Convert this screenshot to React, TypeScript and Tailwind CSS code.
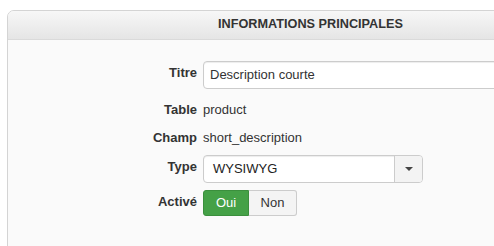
export default function App() {
  const font = { fontFamily: '"Liberation Sans", Arial, sans-serif' };

  return (
    <div className="w-[494px] h-[246px] overflow-hidden bg-white pl-[7px] pt-[10px]" style={font}>
      <div className="w-[607px] h-[260px] border border-[#d4d4d4] rounded-tl-[7px] bg-[#fafafa] text-[13px] text-[#333]">
        {/* header */}
        <div className="h-[29px] rounded-tl-[6px] bg-gradient-to-b from-[#f7f7f7] to-[#e5e5e5] border-b border-[#dadada] flex items-center justify-center">
          <span className="text-[12.7px] font-bold text-[#333]">INFORMATIONS PRINCIPALES</span>
        </div>

        {/* form */}
        <div className="pt-[21px] flex flex-col">
          <div className="flex items-start h-[28px]">
            <div className="w-[189px] text-right font-bold leading-[18px] pt-[3px]">Titre</div>
            <div className="ml-[6px] flex-1">
              <div className="h-[28px] border border-[#cccccc] rounded-[4px] bg-white shadow-[inset_0_1px_1px_rgba(0,0,0,0.075)] flex items-center pl-[6px]">
                Description courte
              </div>
            </div>
          </div>

          <div className="flex items-start h-[18px] mt-[12px]">
            <div className="w-[189px] text-right font-bold leading-[18px]">Table</div>
            <div className="ml-[6px] leading-[18px]">product</div>
          </div>

          <div className="flex items-start h-[18px] mt-[10px]">
            <div className="w-[189px] text-right font-bold leading-[18px]">Champ</div>
            <div className="ml-[6px] leading-[18px]">short_description</div>
          </div>

          <div className="flex items-start h-[28px] mt-[8px]">
            <div className="w-[189px] text-right font-bold leading-[18px] pt-[3px]">Type</div>
            <div className="ml-[6px] w-[220px] h-[28px] flex border border-[#cccccc] rounded-[4px] bg-white shadow-[inset_0_1px_1px_rgba(0,0,0,0.075)]">
              <div className="flex-1 flex items-center pl-[9px] text-[#222]">WYSIWYG</div>
              <div className="w-[28px] border-l border-[#cccccc] bg-[#f3f3f3] rounded-r-[3px] flex items-center justify-center">
                <span className="block w-0 h-0 border-l-[4px] border-r-[4px] border-t-[4px] border-l-transparent border-r-transparent border-t-[#444]" />
              </div>
            </div>
          </div>

          <div className="flex items-start h-[26px] mt-[7px]">
            <div className="w-[189px] text-right font-bold leading-[18px] pt-[3px]">Activé</div>
            <div className="ml-[6px] flex h-[26px]">
              <div className="w-[46px] flex items-center justify-center bg-[#45a147] border border-[#3b8f3d] rounded-l-[3px] text-white">
                Oui
              </div>
              <div className="w-[48px] flex items-center justify-center bg-[#f4f4f4] border border-l-0 border-[#cccccc] rounded-r-[3px] text-[#333]">
                Non
              </div>
            </div>
          </div>
        </div>
      </div>
    </div>
  );
}
